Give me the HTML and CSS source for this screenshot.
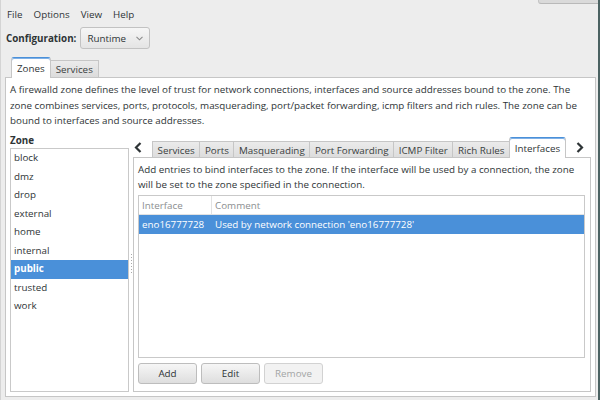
FILE: index.html
```html
<!DOCTYPE html>
<html>
<head>
<meta charset="utf-8">
<link rel="stylesheet" href="styles.css">
</head>
<body>
<div class="win">
  <div class="topband"></div>
  <div class="menubar"><span>File</span><span>Options</span><span>View</span><span>Help</span></div>
  <div class="config">
    <span class="cfg-label">Configuration:</span>
    <div class="combo"><span>Runtime</span><svg class="chev" width="7" height="5" viewBox="0 0 7 5"><polyline points="0.5,0.8 3.5,3.8 6.5,0.8" fill="none" stroke="#8a8a8a" stroke-width="1.1"/></svg></div>
  </div>
  <div class="tabs outer-tabs"><div class="tab active">Zones</div><div class="tab">Services</div></div>
  <div class="page">
    <p class="desc">A firewalld zone defines the level of trust for network connections, interfaces and source addresses bound to the zone. The<br>zone combines services, ports, protocols, masquerading, port/packet forwarding, icmp filters and rich rules. The zone can be<br>bound to interfaces and source addresses.</p>
    <div class="paned">
      <div class="zones">
        <div class="zone-label">Zone</div>
        <ul class="zone-list">
          <li>block</li><li>dmz</li><li>drop</li><li>external</li><li>home</li><li>internal</li><li class="sel">public</li><li>trusted</li><li>work</li>
        </ul>
      </div>
      <div class="handle"></div>
      <div class="inner">
        <div class="inner-tabbar">
          <div class="arrow left"><svg width="8" height="11" viewBox="0 0 8 11"><polyline points="6.5,1 2,5.5 6.5,10" fill="none" stroke="#2e3436" stroke-width="2.2"/></svg></div>
          <div class="tabs inner-tabs">
            <div class="tab">Services</div><div class="tab">Ports</div><div class="tab">Masquerading</div><div class="tab">Port Forwarding</div><div class="tab">ICMP Filter</div><div class="tab">Rich Rules</div><div class="tab active">Interfaces</div>
          </div>
          <div class="arrow right"><svg width="8" height="11" viewBox="0 0 8 11"><polyline points="1.5,1 6,5.5 1.5,10" fill="none" stroke="#2e3436" stroke-width="2.2"/></svg></div>
        </div>
        <div class="inner-page">
          <p class="desc2">Add entries to bind interfaces to the zone. If the interface will be used by a connection, the zone<br>will be set to the zone specified in the connection.</p>
          <div class="tree">
            <div class="tree-head"><div class="col1">Interface</div><div class="col2">Comment</div></div>
            <div class="tree-row sel"><div class="col1">eno16777728</div><div class="col2">Used by network connection 'eno16777728'</div></div>
          </div>
          <div class="buttons">
            <button class="btn">Add</button><button class="btn">Edit</button><button class="btn disabled">Remove</button>
          </div>
        </div>
      </div>
    </div>
  </div>
</div>
</body>
</html>
```
FILE: styles.css
```css
* { box-sizing: border-box; }
html, body { margin: 0; padding: 0; }
body {
  width: 600px; height: 400px; overflow: hidden;
  background: #ededed;
  font-family: "Open Sans", "DejaVu Sans", sans-serif;
  font-size: 9.8px;
  color: #2e3436;
}
.win {
  position: relative;
  width: 600px; height: 400px;
  border-left: 1px solid #d4d4d4;
  border-right: 2px solid #4b6262;
  display: flex; flex-direction: column;
}
.topband {
  position: absolute; top: 0; right: 0;
  width: 60px; height: 4px;
  background: #dadada;
  border-bottom: 1px solid #b9b9b9;
  border-left: 1px solid #c4c4c4;
  border-bottom-left-radius: 3px;
}
.menubar {
  height: 27px; padding: 2px 0 0 6px;
  display: flex; align-items: center; gap: 11px;
}
.config {
  height: 22px; padding-left: 5px;
  display: flex; align-items: center; gap: 4px;
}
.cfg-label { font-weight: bold; }
.combo {
  width: 70px; height: 22px;
  border: 1px solid #c2c2c2; border-radius: 3px;
  background: linear-gradient(#f6f6f6, #e4e4e4);
  display: flex; align-items: center; justify-content: space-between;
  padding: 0 6px 0 6px;
}
.chev { display: block; }
.tabs { display: flex; align-items: flex-end; }
.tab {
  height: 17px; padding: 0 4.6px;
  display: flex; align-items: center;
  border: 1px solid #c6c6c6; border-bottom: none;
  background: linear-gradient(#ebebeb, #dcdcdc);
  color: #3a3f41;
  white-space: nowrap;
  position: relative;
}
.tab + .tab { margin-left: -1px; }
.tab.active {
  background: #fff;
  border-top: 1px solid #4a90d9;
  border-radius: 3px 3px 0 0;
  box-shadow: inset 0 1px #7fb0e6;
  z-index: 2;
  color: #2e3436;
}
.outer-tabs { height: 20px; margin-top: 8px; padding-left: 10px; }
.outer-tabs .tab { padding: 0 5px; }
.outer-tabs .tab.active { height: 21px; margin-bottom: -1px; }
.page {
  margin: 0 2px 0 4px;
  height: 320px;
  border: 1px solid #c6c6c6;
  background: #fff;
  padding: 0 4px 4px 4px;
  display: flex; flex-direction: column;
}
.desc { margin: 0; padding-top: 4px; line-height: 15.5px; white-space: nowrap; }
.paned { flex: 1; display: flex; margin-top: 5.5px; min-width: 0; }
.zones { width: 119px; flex-shrink: 0; display: flex; flex-direction: column; }
.zone-label { height: 14px; line-height: 14px; font-weight: bold; }
.zone-list {
  flex: 1; margin: 0; padding: 0; list-style: none;
  border: 1px solid #c9c9c9;
}
.zone-list li { height: 18.5px; line-height: 18.5px; padding-left: 3px; }
.zone-list li.sel { background: #4a90d9; color: #fff; font-weight: bold; }
.handle { width: 4px; flex-shrink: 0; display: flex; align-items: center; justify-content: center; }
.handle::before {
  content: ""; display: block; width: 1px; height: 19px;
  background: repeating-linear-gradient(#a8a8a8 0 1px, transparent 1px 3px);
}
.inner { flex: 1; min-width: 0; display: flex; flex-direction: column; margin-top: 3px; }
.inner-tabbar { height: 21px; display: flex; align-items: flex-end; }
.arrow { height: 21px; flex-shrink: 0; display: flex; align-items: center; }
.arrow.left { width: 19px; padding-left: 1px; }
.arrow.right { flex: 1; justify-content: center; padding-left: 4px; }
.inner-tabs { height: 21px; }
.inner-tabs .tab.active { height: 21px; }
.inner-page {
  flex: 1; margin-top: -1px;
  border: 1px solid #c6c6c6;
  padding: 4px 5px 7px 4px;
  display: flex; flex-direction: column;
  position: relative; z-index: 1;
}
.desc2 { margin: 0; line-height: 15px; white-space: nowrap; }
.tree {
  flex: 1; margin-top: 3px;
  border: 1px solid #c9c9c9;
}
.tree-head, .tree-row { display: flex; }
.tree-head { height: 19px; border-bottom: 1px solid #e2e2e2; color: #8b8e8f; }
.tree-head .col1 { border-right: 1px solid #e2e2e2; }
.col1 { width: 73px; padding-left: 3px; display: flex; align-items: center; }
.col2 { flex: 1; padding-left: 3px; display: flex; align-items: center; }
.tree-row { height: 19px; }
.tree-row.sel { background: #4a90d9; color: #fff; }
.buttons { display: flex; gap: 4px; margin-top: 5px; height: 21px; }
.btn {
  width: 59px; height: 21px;
  font: inherit; color: #2e3436;
  border: 1px solid #bdbdbd; border-radius: 3px;
  background: linear-gradient(#f6f6f6, #dedede);
  padding: 0;
}
.btn.disabled { color: #a3a5a5; border-color: #d2d2d2; background: #f2f2f2; }
```
